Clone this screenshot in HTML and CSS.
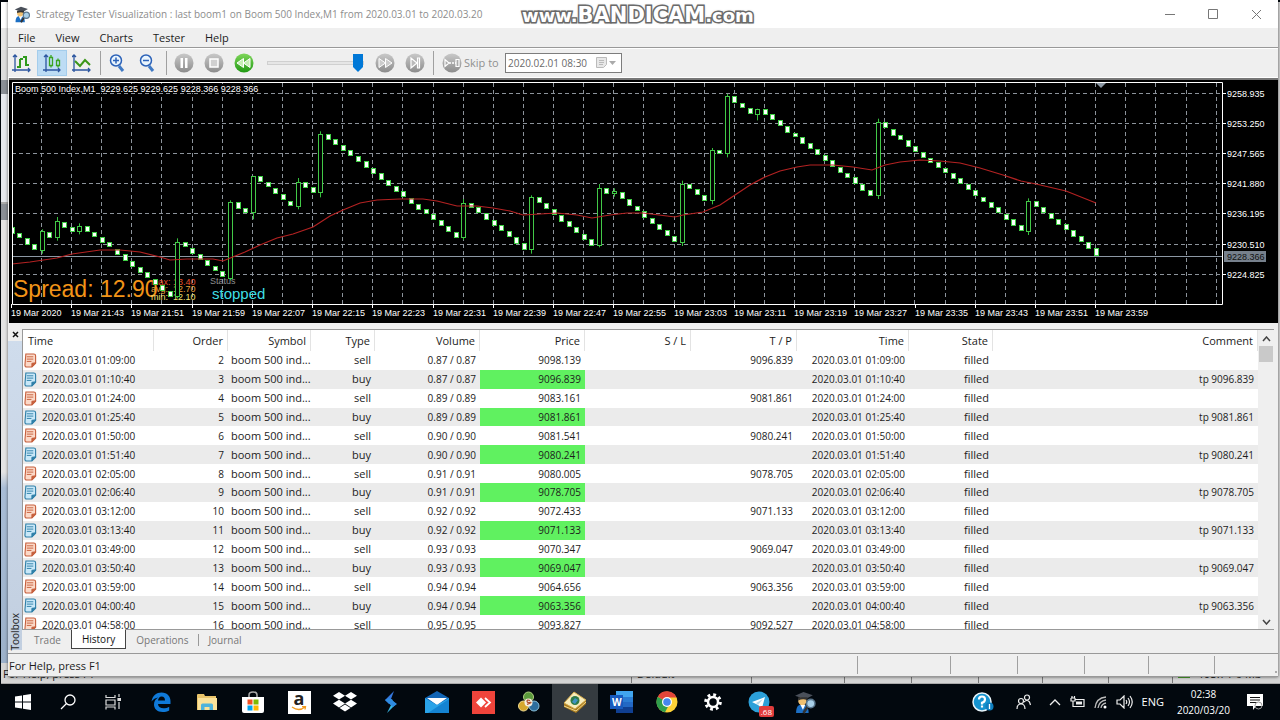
FILE: index.html
```
<!DOCTYPE html>
<html lang="en">

<head>
    <meta charset="UTF-8" />
    <title>Strategy Tester Visualization</title>
    <link rel="stylesheet" href="styles.css">
</head>

<body>
    <svg class="defs" width="0" height="0">
        <defs>
            <linearGradient id="ball" x1="0" y1="0" x2="0" y2="1">
                <stop offset="0" stop-color="#c9c9c9" />
                <stop offset="1" stop-color="#8c8c8c" />
            </linearGradient>
            <linearGradient id="ballGreen" x1="0" y1="0" x2="0" y2="1">
                <stop offset="0" stop-color="#7fd65a" />
                <stop offset="1" stop-color="#219a14" />
            </linearGradient>
            <symbol id="grad" viewBox="0 0 22 22">
                <path d="M2 21c0-6 2-8 6-8s6 3 6 8z" fill="#1c6fc4" />
                <path d="M6 13l2.500 5 2.500-5z" fill="#fff" />
                <circle cx="8" cy="9.500" r="4" fill="#f0c070" />
                <path d="M1 4.500L9 1l9 3-7 4z" fill="#4a505a" />
                <path d="M4 6v3q5-2 9 0V6z" fill="#333" />
                <path d="M13 15l-4 6" stroke="#333" stroke-width="2.500" />
                <circle cx="16" cy="12" r="4" fill="#a8cfe8" stroke="#59758c" stroke-width="1.500" />
            </symbol>
            <symbol id="note" viewBox="0 0 14 16">
                <path d="M2 1h8.500q2 0 2 2v8l-4 4H3q-2 0-2-2z" fill="var(--fill)" stroke="var(--line)" stroke-width="1.200" />
                <path d="M12.500 10.500l-4 4.500v-4z" fill="var(--line)" stroke="var(--line)" />
                <path d="M3 4h7M3 6.500h7M3 9h5" stroke="var(--line)" stroke-width="1" />
            </symbol>
        </defs>
    </svg>

    <div class="desktop">
        <!-- terminal window behind the tester -->
        <div class="terminal">
            <div class="terminal-side"></div>
            <div class="terminal-status">
                <span class="help">For Help, press F1</span>
                <i class="w120">Default</i><i class="w93"></i><i class="w67"></i><i class="w67"></i><i class="w64"></i><i class="w66"></i><i class="w64"></i>
                <i class="net"><b></b>193.7 / 0 Mb</i>
            </div>
        </div>

        <main class="window">
            <header class="titlebar">
                <svg width="17" height="17"><use href="#grad" /></svg>
                <h1>Strategy Tester Visualization : last boom1 on Boom 500 Index,M1 from 2020.03.01 to 2020.03.20</h1>
                <button aria-label="Minimize"><svg width="11" height="11"><path d="M0 5.500h10" /></svg></button>
                <button aria-label="Maximize"><svg width="11" height="11"><path d="M.5.500h9v9h-9z" /></svg></button>
                <button aria-label="Close"><svg width="11" height="11"><path d="M1 1l9 9M10 1l-9 9" /></svg></button>
            </header>

            <nav class="menu">
                <button>File</button>
                <button>View</button>
                <button>Charts</button>
                <button>Tester</button>
                <button>Help</button>
            </nav>

            <div class="toolbar">
                <button aria-label="Bar chart">
                    <svg width="20" height="20" fill="none" stroke="#2c56a0" stroke-width="1.300">
                        <path d="M3 2v17M0 17h18M1 4l2-2 2 2M16 15l2 2-2 2" />
                        <path d="M8 6v9M8 14H5M8 6h3M14 3v10M14 4h-3M14 12h3" stroke="#2f9a1c" stroke-width="2" />
                    </svg>
                </button>
                <button class="on" aria-label="Candlesticks">
                    <svg width="20" height="20" fill="none" stroke="#2c56a0" stroke-width="1.300">
                        <path d="M4 2v17M1 17h17M2 4l2-2 2 2M16 15l2 2-2 2" />
                        <path d="M7.500 4.500h3v8h-3zM9 2v2.500M9 12.500v2M14.500 7.500h3v5h-3zM16 5.500v2M16 12.500v2" stroke="#3aa51f" />
                    </svg>
                </button>
                <button aria-label="Line chart">
                    <svg width="20" height="20" fill="none" stroke="#2c56a0" stroke-width="1.300">
                        <path d="M2 2v17M0 17h18M0 4l2-2 2 2M16 15l2 2-2 2" />
                        <path d="M3 8l5 5 5-6 5 5" stroke="#3c961a" stroke-width="2" />
                    </svg>
                </button>
                <span class="sep"></span>
                <button aria-label="Zoom in">
                    <svg width="20" height="20" fill="none" stroke="#2c62b8" stroke-width="1.500">
                        <path d="M11 13l4 5" stroke="#3f79c4" stroke-width="3" />
                        <circle cx="8" cy="7.500" r="5.500" fill="#eaf5fd" />
                        <path d="M5 7.500h6M8 4.500v6" />
                    </svg>
                </button>
                <button aria-label="Zoom out">
                    <svg width="20" height="20" fill="none" stroke="#2c62b8" stroke-width="1.500">
                        <path d="M11 13l4 5" stroke="#3f79c4" stroke-width="3" />
                        <circle cx="8" cy="7.500" r="5.500" fill="#eaf5fd" />
                        <path d="M5 7.500h6" />
                    </svg>
                </button>
                <span class="sep"></span>
                <button aria-label="Pause">
                    <svg width="20" height="20"><circle cx="10" cy="10" r="9.500" fill="url(#ball)" /><path d="M6.500 5h2.500v10H6.500zM11 5h2.500v10H11z" fill="#fff" /></svg>
                </button>
                <button aria-label="Stop">
                    <svg width="20" height="20"><circle cx="10" cy="10" r="9.500" fill="url(#ball)" /><path d="M6 6h8v8H6z" fill="#d0d0d0" stroke="#fff" stroke-width="1.500" /></svg>
                </button>
                <button aria-label="Slower">
                    <svg width="20" height="20"><circle cx="10" cy="10" r="9.500" fill="url(#ballGreen)" /><path d="M9.500 5.500v9L3 10zM16 5.500v9L9.500 10z" fill="#c5efb4" stroke="#fff" /></svg>
                </button>
                <input class="speed" type="range" min="0" max="100" value="100" aria-label="Speed">
                <button aria-label="Faster">
                    <svg width="20" height="20"><circle cx="10" cy="10" r="9.500" fill="url(#ball)" /><path d="M4 5.500v9l6.500-4.500zM10.500 5.500v9L17 10z" fill="#ccc" stroke="#fff" /></svg>
                </button>
                <button aria-label="To end">
                    <svg width="20" height="20"><circle cx="10" cy="10" r="9.500" fill="url(#ball)" /><path d="M6 5v10l6-5zM12.500 5h2v10h-2z" fill="#bbb" stroke="#fff" stroke-width="1.200" /></svg>
                </button>
                <span class="sep"></span>
                <label class="skip" for="skip">
                    <svg width="20" height="20"><circle cx="10" cy="10" r="9.500" fill="url(#ball)" /><path d="M3 6.500v7L7 10zM14 6.500h3v7h-3z" fill="#aaa" stroke="#fff" stroke-width="1.200" /><path d="M7 10h7" stroke="#fff" stroke-width="1.500" stroke-dasharray="2 1" /></svg>
                    Skip to
                </label>
                <div class="datebox">
                    <input id="skip" type="text" value="2020.02.01 08:30" disabled>
                    <svg width="20" height="12"><path d="M.5.500h10v7l-3 3h-7z" fill="#e8e8e8" stroke="#bbb" /><path d="M3 3.500h5M3 5.500h5M3 7.500h4" stroke="#bbb" /><path d="M13 4h7l-3.500 4z" fill="#aaa" /></svg>
                </div>
            </div>

            <section class="chart">
                <svg id="chart" width="1268" height="243" viewBox="9 80 1268 243"></svg>
            </section>

            <section class="toolbox">
                <aside>
                    <button aria-label="Close toolbox"><svg width="7" height="7"><path d="M1 1l5 5M6 1L1 6" stroke="#111" stroke-width="1.500" /></svg></button>
                    <span>Toolbox</span>
                </aside>
                <div class="panel">
                    <div class="list">
                        <div class="scroller">
                            <table>
                                <colgroup>
                                    <col class="c-time"><col class="c-order"><col class="c-symbol"><col class="c-type">
                                    <col class="c-volume"><col class="c-volume"><col class="c-sl"><col class="c-sl">
                                    <col class="c-close"><col class="c-state"><col>
                                </colgroup>
                                <thead>
                                    <tr>
                                        <th>Time</th><th>Order</th><th>Symbol</th><th>Type</th><th>Volume</th><th>Price</th>
                                        <th>S / L</th><th>T / P</th><th>Time</th><th>State</th><th>Comment</th>
                                    </tr>
                                </thead>
                                <tbody id="orders"></tbody>
                            </table>
                        </div>
                        <div class="scrollbar">
                            <svg width="9" height="6"><path d="M1 5l3.500-4L8 5" /></svg>
                            <i></i>
                            <svg class="down" width="9" height="6"><path d="M1 1l3.500 4L8 1" /></svg>
                        </div>
                    </div>
                    <div class="tabs">
                        <button>Trade</button>
                        <button class="active">History</button>
                        <button>Operations</button>
                        <button class="split">Journal</button>
                    </div>
                </div>
            </section>

            <footer class="status">
                <span>For Help, press F1</span>
                <i class="w93"></i><i class="w67"></i><i class="w67"></i><i class="w64"></i><i class="w66"></i><i class="w64 grip"></i>
            </footer>
        </main>

        <div class="watermark">www.<b>BANDICAM</b>.com</div>
    </div>

    <div class="taskbar">
        <button class="sys" aria-label="Start"><svg width="16" height="16" fill="#fff"><path d="M0 2.500l7-1v6H0zM8 1.300L16 0v7.500H8zM0 8.500h7v6l-7-1zM8 8.500h8V16l-8-1.300z" /></svg></button>
        <button class="sys" aria-label="Search"><svg width="16" height="16" fill="none" stroke="#fff" stroke-width="1.300"><circle cx="10" cy="6" r="5" /><path d="M6.500 9.500L1 15" /></svg></button>
        <button class="sys" aria-label="Task view"><svg width="16" height="16" fill="none" stroke="#ddd" stroke-width="1.200"><path d="M1 1v2.500h9V1M1 6h9v5H1zM1 15.500V13h9v2.500M14 0v3M14 8v7" /><path d="M13 4.500h2.500v2H13z" fill="#ddd" /></svg></button>
        <button class="first" aria-label="Edge"><svg width="20" height="20"><path d="M.5 9.500C1.500 3.500 5.500.5 10.500.5c6 0 9 4 9 9V12H7c.2 3 2.500 4.300 5.500 4.300 2 0 4-.6 5.700-1.600V18.500c-2 1-4.200 1.500-6.500 1.500C6 20 3 16.500 3 12.500c0-3 1.600-5.500 4.300-6.900C4.500 6 2.300 7.200.5 9.500zM7 8.500h7c0-2.500-1.200-4-3.400-4C8.500 4.500 7.300 6.300 7 8.500z" fill="#0f79d8" /></svg></button>
        <button aria-label="File Explorer"><svg width="22" height="20"><path d="M1 3q0-1 1-1h6l1 2h11v14H1z" fill="#e9c46a" /><path d="M2 6h19v12H2z" fill="#fbe29a" /><path d="M5 18v-5q0-1.500 1.500-1.500h9Q17 11.500 17 13v5h-3.500v-3h-5v3z" fill="#4fb3dc" /></svg></button>
        <button aria-label="Store"><svg width="22" height="22"><path d="M7 6V4q0-3 4-3t4 3v2" fill="none" stroke="#aaa" stroke-width="1.500" /><path d="M0 6h22v14q0 2-2 2H2q-2 0-2-2z" fill="#fff" /><path d="M5.500 8.500h5v5h-5z" fill="#f25022" /><path d="M11.500 8.500h5v5h-5z" fill="#7fba00" /><path d="M5.500 14.500h5v5h-5z" fill="#00a4ef" /><path d="M11.500 14.500h5v5h-5z" fill="#ffb900" /></svg></button>
        <button aria-label="Amazon"><span class="amazon">a<svg width="16" height="5"><path d="M1 1q7 5 13 0M11 .6h3.500L14 3.500" fill="none" stroke="#f29a1f" stroke-width="1.300" /></svg></span></button>
        <button aria-label="Dropbox"><svg width="24" height="20" fill="#fff"><path d="M6 0l6 3.800-6 3.800-6-3.800zM18 0l6 3.800-6 3.800-6-3.800zM6 7.800l6 3.800-6 3.800-6-3.800zM18 7.800l6 3.800-6 3.800-6-3.800zM12 12.600l5.500 3.500L12 19.600l-5.500-3.500z" /></svg></button>
        <button aria-label="Trading app"><svg width="14" height="22"><path d="M10 0L1 9l4 4 4-4-2-1z" fill="#3577dd" /><path d="M3 22l9-9-5-5-3 3 3 3z" fill="#37b4e2" /><path d="M1 9l4-2 8 6-4 3z" fill="#2f8be0" /></svg></button>
        <button aria-label="Mail"><svg width="24" height="22"><path d="M0 7l12-7 12 7v8H0z" fill="#1265b5" /><path d="M2 7h20l-10 7z" fill="#fff" /><path d="M0 7l12 7 12-7v15H0z" fill="#2aa3e8" /><path d="M3 22l21-14v14z" fill="#1483d2" /></svg></button>
        <button aria-label="AnyDesk"><svg width="23" height="23"><path d="M0 0h23v23H0z" fill="#ef443b" /><path d="M4 11.500L9 6.500l5 5-5 5z" fill="#fff" /><path d="M13 7l5 4.500-5 4.500" fill="none" stroke="#fff" stroke-width="1.800" /></svg></button>
        <button aria-label="MetaTrader"><svg width="22" height="22"><circle cx="10.500" cy="6" r="5" fill="#5b9a3c" stroke="#b3cf82" /><circle cx="5.500" cy="15" r="5" fill="#d6a72d" stroke="#f0dc93" /><circle cx="16" cy="15" r="5" fill="#2d6e9e" stroke="#8abfd8" /><circle cx="10.500" cy="11.500" r="4" fill="#f6efe0" /><path d="M12 9.500q-3-1-3 .7t3 1.200-3 2" fill="none" stroke="#b0502c" stroke-width="1.200" /></svg></button>
        <button class="active" aria-label="MetaTrader terminal"><svg width="24" height="22"><path d="M1 13L11 1l12 8v4L13 22 1 16z" fill="#a87a20" /><path d="M1 15l12 5 10-9" fill="none" stroke="#f0d78a" /><path d="M1 12L11 1l12 8-11 9z" fill="#f8ecbb" stroke="#d1a849" /><circle cx="12" cy="9.500" r="4.500" fill="#2f7a49" /><path d="M9 11l3-4 3 2-3 4z" fill="#3f92c4" /></svg></button>
        <button aria-label="Word"><svg width="23" height="22"><path d="M6 0h17v22H6z" fill="#2368c4" /><path d="M6 0h17v6H6z" fill="#41a5ee" /><path d="M6 6h17v5H6z" fill="#2b7cd3" /><path d="M6 16h17v6H6z" fill="#103f91" /><path d="M0 4h13v14H0z" fill="#185abd" /><text x="2" y="15" class="word">W</text></svg></button>
        <button aria-label="Chrome"><svg width="22" height="22"><circle cx="11" cy="11" r="10.500" fill="#fdd237" /><path d="M11 11L1.800 5.700A10.500 10.500 0 0 0 9 21.300L13.500 13z" fill="#2f9e4c" /><path d="M11 11L1.800 5.700A10.500 10.500 0 0 1 20.500 6.500H11z" fill="#e2453a" /><circle cx="11" cy="11" r="5" fill="#fff" /><circle cx="11" cy="11" r="3.800" fill="#4586ee" /></svg></button>
        <button aria-label="Settings"><svg width="18" height="18" fill="none" stroke="#fff"><circle cx="9" cy="9" r="5" stroke-width="2.500" /><circle cx="9" cy="9" r="7.300" stroke-width="3" stroke-dasharray="2.800 2.930" /></svg></button>
        <button class="telegram" aria-label="Telegram"><svg width="22" height="22"><circle cx="11" cy="11" r="10.500" fill="#2ca0d9" /><path d="M4 11l13-5-3 11-4-3z" fill="#fff" /><path d="M8 12l7-4-5 6z" fill="#b8d9ea" /></svg><em>.68</em></button>
        <button aria-label="Strategy Tester"><svg width="23" height="23"><use href="#grad" /></svg></button>

        <div class="tray">
            <svg width="22" height="22"><circle cx="10" cy="11" r="9" fill="#1593cf" stroke="#e8f4fa" stroke-width="1.500" /><path d="M7 8.500q0-3 3-3t3 2.700-3 3.500v1.800M10 14.500v2" fill="none" stroke="#fff" stroke-width="2.200" /><circle cx="17.500" cy="15.500" r="4" fill="#0f7fc0" /><path d="M17.500 13v5" stroke="#fff" stroke-width="1.300" /></svg>
            <svg class="people" width="15" height="16" fill="none" stroke="#eee" stroke-width="1.200"><circle cx="5" cy="7" r="2.500" /><path d="M1 15q0-5 4-5t4 5" /><circle cx="11" cy="3.500" r="2.500" /><path d="M8 8q3-3 5.500 0l1 3" /></svg>
            <svg width="12" height="8" fill="none" stroke="#eee" stroke-width="1.300"><path d="M1 7l5-5 5 5" /></svg>
            <svg width="15" height="12" fill="none" stroke="#eee" stroke-width="1.200"><path d="M5 3.500h9v7H3V8M1 2h4M2 0v2M4.500 0v2M1 2v3h4V2M3 5v3" /><path d="M6 5.500h6v3H6z" fill="#eee" stroke="none" /></svg>
            <svg width="13" height="13" fill="none" stroke="#bbb" stroke-width="1.300"><path d="M1 12Q2 2 12 1M4 12q1-7 8-8M7 12q.5-4 5-5" /><circle cx="11" cy="11" r="1.500" fill="#fff" stroke="none" /></svg>
            <svg width="17" height="14" fill="none" stroke="#eee" stroke-width="1.200"><path d="M1 5h3l4-4v12L4 9H1zM10 5q1.500 2 0 4M12 3q3 4 0 8M14 1q4.500 6 0 12" /></svg>
            <span>ENG</span>
            <time>02:38<br>2020/03/20</time>
            <svg width="16" height="17"><path d="M0 0h16v12H9l-3 4v-4H0z" fill="#fff" /><path d="M3 3.500h10M3 6h10M3 8.500h7" stroke="#111" /><circle cx="11.500" cy="11.500" r="3.500" fill="none" stroke="#999" /></svg>
        </div>
    </div>

    <script src="script.js"></script>
</body>

</html>
```
FILE: styles.css
```
* {
    box-sizing: border-box;
}

body {
    margin: 0;
    height: 100vh;
    display: flex;
    flex-direction: column;
    overflow: hidden;
    background: #02080e;
    font: 11px/16px "Open Sans", "Noto Sans", sans-serif;
    color: #1c1c1c;
}

button,
input {
    font: inherit;
    color: inherit;
    border: 0;
    padding: 0;
    margin: 0;
    background: none;
}

svg {
    display: block;
    flex: none;
}

.defs {
    position: absolute;
}

.desktop {
    position: relative;
    flex: 1;
    min-height: 0;
}

/* terminal in the background */

.terminal {
    position: absolute;
    inset: 2px 0 0 1px;
    background: #d5d5d5;
    display: flex;
    flex-direction: column;
}

.terminal-side {
    flex: 1;
    width: 7px;
    background: linear-gradient(#fff 0 26px, #e6e6e6 26px 48px, #ddd 48px 78px, #8a8f96 78px 92px, #e6e9ee 92px 200px, #aaa 200px 202px, #8a8f96 202px 218px, #e4e4e4 218px 470px, #a9bdd6 486px, #9cb1ca);
}

.terminal-status {
    height: 21px;
    display: flex;
    border-bottom: 1px solid #aaa;
    line-height: 22px;
}

.terminal-status .help {
    flex: 1;
    padding-left: 2px;
}

.terminal-status i {
    padding-left: 5px;
    border-left: 1px solid #777;
    font-style: normal;
}

.terminal-status .net {
    width: 108px;
    white-space: nowrap;
}

.terminal-status .net b {
    display: inline-block;
    width: 12px;
    height: 9px;
    margin-right: 8px;
    background: #4aa02c;
}

.w120 { width: 120px; }
.w93 { width: 93px; }
.w67 { width: 67px; }
.w66 { width: 66px; }
.w64 { width: 64px; }

/* tester window */

.window {
    position: absolute;
    inset: 0 2px 7px 8px;
    display: flex;
    flex-direction: column;
    background: #efefef;
    box-shadow: 0 0 3px #0009;
}

.titlebar {
    height: 28px;
    display: flex;
    align-items: center;
    padding-left: 6px;
    background: #fff;
    color: #8d8d8d;
}

.titlebar h1 {
    flex: 1;
    margin: 0 0 0 5px;
    font-size: 10px;
    font-weight: 400;
}

.titlebar button {
    width: 43px;
    height: 28px;
    display: grid;
    place-items: center;
}

.titlebar path {
    fill: none;
    stroke: #777;
}

.menu {
    height: 20px;
    display: flex;
    gap: 20px;
    padding-left: 10px;
    border-bottom: 1px solid #999;
}

.toolbar {
    height: 30px;
    display: flex;
    align-items: center;
    gap: 2px;
    border-top: 1px solid #fff;
    border-bottom: 1px solid #fff;
}

.toolbar button {
    width: 28px;
    height: 24px;
    display: grid;
    place-items: center;
}

.toolbar .on {
    background: #bddcf4;
    outline: 1px solid #a4cdec;
}

.sep {
    width: 1px;
    height: 24px;
    margin: 0 1px 0 2px;
    background: #a0a0a0;
}

.speed {
    appearance: none;
    width: 97px;
    height: 20px;
    margin: 0 5px 0 7px;
}

.speed::-webkit-slider-runnable-track {
    height: 4px;
    border: 1px solid #d0d0d0;
    background: #e6e6e6;
}

.speed::-webkit-slider-thumb {
    appearance: none;
    width: 10px;
    height: 18px;
    margin-top: -8px;
    background: #0078d7;
    clip-path: polygon(0 0, 100% 0, 100% 72%, 50% 100%, 0 72%);
}

.skip {
    display: flex;
    align-items: center;
    gap: 2px;
    width: 61px;
    margin-left: 5px;
    color: #8f8f8f;
    white-space: nowrap;
}

.datebox {
    display: flex;
    align-items: center;
    width: 117px;
    height: 20px;
    padding: 0 5px 0 2px;
    border: 1px solid #7d7d7d;
    background: #fff;
    color: #6a6a6a;
    font-size: 10px;
}

.datebox input {
    flex: 1;
    min-width: 0;
}

.chart {
    height: 245px;
    margin-left: 1px;
    border-top: 2px solid #777;
    background: #000;
    overflow: hidden;
}

#chart {
    font: 9px "Liberation Sans", Arial, sans-serif;
    fill: #fff;
}

#chart .spread {
    font-size: 23px;
}

#chart .stopped {
    font-size: 15px;
}

/* toolbox */

.toolbox {
    flex: 1;
    min-height: 0;
    margin-top: 6px;
    display: flex;
    padding-bottom: 3px;
    border-bottom: 1px solid #999;
}

.toolbox aside {
    width: 14px;
    display: flex;
    flex-direction: column;
    justify-content: space-between;
    align-items: center;
    background: linear-gradient(#efefef 12px, #cfdcec 12px, #c2cfe0);
}

.toolbox aside button {
    height: 10px;
}

.toolbox aside span {
    writing-mode: vertical-rl;
    transform: rotate(180deg);
    font-size: 10px;
    line-height: 14px;
}

.panel {
    flex: 1;
    min-width: 0;
    display: flex;
    flex-direction: column;
    padding-right: 4px;
}

.list {
    flex: 1;
    min-height: 0;
    display: flex;
    border: 1px solid #999;
    border-width: 1px 0 1px 1px;
    background: #fff;
}

.scroller {
    flex: 1;
    overflow: hidden;
}

table {
    width: 100%;
    height: 304px;
    table-layout: fixed;
    border-collapse: collapse;
}

.c-time { width: 131px; }
.c-order { width: 74px; }
.c-symbol { width: 83px; }
.c-type { width: 64px; }
.c-volume { width: 105px; }
.c-sl { width: 106px; }
.c-close { width: 112px; }
.c-state { width: 84px; }

th {
    height: 21px;
    padding: 0 5px;
    font-weight: 400;
    text-align: right;
    box-shadow: inset -1px 0 #e3e3e3;
}

th:first-child {
    text-align: left;
}

td {
    height: 18px;
    padding: 0 4px;
    font-size: 10px;
    line-height: 16px;
    text-align: right;
    white-space: nowrap;
}

td.text {
    font-size: 11px;
}

td:nth-child(3) {
    text-align: left;
    padding: 0 3px;
}

td .time {
    display: flex;
    align-items: center;
    gap: 5px;
    margin-left: -3px;
}

tr.buy td {
    background: #ebebeb;
}

tr.buy td.hit {
    background: #60f160;
}

.sell {
    --fill: #fbd9c8;
    --line: #c65f3c;
}

.buy {
    --fill: #c9e8f8;
    --line: #2f7fa8;
}

.scrollbar {
    width: 16px;
    display: flex;
    flex-direction: column;
    align-items: center;
    padding: 6px 0 4px;
    background: #efefef;
}

.scrollbar path {
    fill: none;
    stroke: #444;
    stroke-width: 1.5;
}

.scrollbar i {
    width: 14px;
    height: 16px;
    margin-top: 4px;
    background: #c9c9c9;
}

.scrollbar .down {
    margin-top: auto;
}

.tabs {
    height: 20px;
    display: flex;
    padding-left: 2px;
    font-size: 10px;
    color: #777;
}

.tabs button {
    height: 19px;
    padding: 0 10px;
}

.tabs .active {
    margin-top: -1px;
    height: 20px;
    border: 1px solid #444;
    border-top-color: #fff;
    background: #fff;
    color: #111;
}

.tabs .split {
    position: relative;
}

.tabs .split::before {
    content: "";
    position: absolute;
    left: 0;
    top: 4px;
    height: 12px;
    border-left: 1px solid #999;
}

.status {
    height: 23px;
    display: flex;
    align-items: flex-end;
    padding: 0 0 2px 1px;
    border-bottom: 1px solid #999;
}

.status span {
    flex: 1;
}

.status i {
    height: 18px;
    border-left: 1px solid #a0a0a0;
}

.grip {
    background: radial-gradient(circle at 2px 2px, #aaa 1px, transparent 1px) right bottom / 4px 4px no-repeat;
}

.watermark {
    position: absolute;
    left: 522px;
    top: 3px;
    font: bold 18px/24px "DejaVu Sans", sans-serif;
    color: #fff;
    paint-order: stroke;
    -webkit-text-stroke: 3px #666;
    text-shadow: 0 0 3px #777;
}

.watermark b {
    font-size: 21px;
}

/* taskbar */

.taskbar {
    height: 36px;
    display: flex;
    color: #fff;
    background: #02080e;
}

.taskbar button {
    width: 46px;
    display: grid;
    place-items: center;
}

.taskbar .sys {
    width: 45px;
}

.taskbar .first {
    margin-left: 3px;
}

.taskbar .active {
    background: #353b40;
}

.amazon {
    width: 23px;
    height: 23px;
    background: #fff;
    color: #222;
    font: bold 18px/15px "Open Sans", sans-serif;
}

.amazon svg {
    margin: 0 auto;
}

.word {
    font: bold 10px "Open Sans", sans-serif;
    fill: #fff;
}

.telegram {
    position: relative;
}

.telegram em {
    position: absolute;
    right: 8px;
    bottom: 3px;
    padding: 0 2px;
    border-radius: 2px;
    background: #e03c3c;
    font: 8px/11px "Open Sans", sans-serif;
}

.tray {
    margin-left: auto;
    display: flex;
    align-items: center;
    gap: 9px;
    padding-right: 17px;
}

.tray .people {
    margin: 0 9px 0 13px;
}

.tray time {
    margin: 0 8px 0 4px;
    font-size: 10px;
    text-align: center;
}
```
FILE: script.js
```
// candles: top, bottom, [wick top, wick bottom] for rising ones, three units per pixel
var candles = [
    [441, 461], [460, 475], [475, 495], [493, 512], [453, 512, 448, 521], [455, 472], [424, 475, 411, 482], [425, 443],
    [442, 458], [438, 455, 430, 463], [438, 457], [456, 470], [470, 487], [487, 503], [506, 523], [523, 543],
    [543, 560], [560, 577], [577, 595], [596, 613], [616, 633], [633, 651], [487, 652, 475, 655], [487, 501],
    [503, 521], [521, 538], [541, 558], [558, 574], [574, 592], [365, 595, 361, 601], [365, 385], [385, 401],
    [289, 400, 289, 418], [289, 307], [307, 323], [325, 343], [343, 361], [362, 376], [306, 380, 294, 388], [306, 323],
    [322, 341], [163, 340, 154, 352], [161, 179], [178, 196], [195, 212], [210, 228], [227, 244], [244, 264],
    [263, 281], [280, 301], [300, 318], [317, 334], [334, 353], [353, 372], [371, 388], [388, 403],
    [403, 422], [421, 439], [439, 456], [455, 472], [368, 472, 357, 480], [368, 382], [382, 400], [400, 420],
    [419, 437], [436, 453], [452, 470], [470, 490], [489, 510], [352, 510, 346, 521], [351, 368], [368, 386],
    [386, 403], [404, 424], [424, 442], [442, 461], [461, 478], [478, 498], [325, 499, 312, 502], [325, 343],
    [334, 343, 325, 350], [335, 357], [357, 379], [379, 394], [394, 414], [413, 432], [432, 450], [450, 467],
    [469, 488], [312, 488, 302, 498], [311, 325], [328, 346], [346, 363], [210, 363, 204, 373], [211, 224], [48, 223, 42, 232],
    [48, 70], [70, 86], [85, 103], [86, 103, 86, 121], [86, 103], [103, 120], [120, 139], [139, 159],
    [159, 172], [170, 190], [190, 208], [206, 224], [224, 242], [241, 261], [260, 278], [278, 292],
    [292, 312], [312, 332], [331, 349], [127, 349, 116, 357], [127, 145], [146, 166], [165, 179], [179, 199],
    [199, 217], [216, 233], [233, 247], [247, 264], [263, 279], [278, 296], [295, 312], [312, 331],
    [331, 349], [350, 366], [365, 383], [382, 400], [401, 418], [416, 437], [436, 455], [362, 455, 355, 465],
    [362, 381], [382, 400], [399, 416], [416, 434], [433, 451], [450, 470], [469, 488], [487, 507], [505, 528],
];

var average = "12,264 30,262 57,258 72,254 100,250 120,250 140,252 160,257 170,260 187,259 213,259 223,261 245,252 260,245 277,238 293,234 313,227 330,216 343,210 360,203 377,200 400,199 423,199 437,201 457,206 477,206 493,208 510,211 523,215 557,213 577,215 592,218 610,215 627,213 643,213 675,217 683,215 703,212 720,205 735,195 750,185 765,177 780,171 797,167 810,165 833,165 853,167 872,170 885,165 900,162 920,160 940,161 960,163 980,168 1003,175 1021,181 1036,184 1066,191 1096,203";

var prices = ["9258.935", "9253.250", "9247.565", "9241.880", "9236.195", "9230.510", "9224.825"];
var times = ["2020", "21:43", "21:51", "21:59", "22:07", "22:15", "22:23", "22:31", "22:39", "22:47", "22:55", "23:03", "23:11", "23:19", "23:27", "23:35", "23:43", "23:51", "23:59"];

function drawChart() {
    var s = "";
    var step = 7.53;
    var i;

    // grid
    for (i = 0; i < 40; i++) {
        var gx = Math.round(42 + i * step * 4) - 0.5;
        s += '<path d="M' + gx + ' 83V304" stroke="#8c939b" stroke-dasharray="4 3"/>';
    }
    for (i = 0; i < prices.length; i++) {
        var gy = Math.round(94 + i * 30.1);
        s += '<path d="M12 ' + (gy - 0.5) + 'H1222" stroke="#8c939b" stroke-dasharray="4 3"/>';
        s += '<path d="M1222 ' + (gy - 0.5) + 'h4" stroke="#fff"/>';
        s += '<text x="1227" y="' + (gy + 3) + '">' + prices[i] + '</text>';
    }
    s += '<path d="M12 256.500H1222" stroke="#8c98a4"/>';

    // comments drawn by the expert
    s += '<text class="spread" x="13" y="297" fill="#f29418">Spread: 12.90</text>';
    s += '<text x="151" y="285" fill="#e2502c">max: 13.40</text>';
    s += '<text x="151" y="292" fill="#e8a03c">avg:&#160; 12.70</text>';
    s += '<text x="151" y="300" fill="#f0e070">min:&#160; 12.10</text>';
    s += '<text x="210" y="284" fill="#8f8f8f">Status</text>';
    s += '<text class="stopped" x="212" y="299" fill="#3fdfe6">stopped</text>';

    for (i = 0; i < candles.length; i++) {
        var c = candles[i];
        var x = Math.round(11.6 + i * step);
        var top = Math.round(80 + c[0] / 3);
        var h = Math.round((c[1] - c[0]) / 3) - 1;
        if (c.length > 2) {
            s += '<path d="M' + (x + 0.5) + ' ' + (80 + c[2] / 3) + 'V' + (80 + c[3] / 3) + '" stroke="#35c13c"/>';
            s += '<rect x="' + (x - 1.5) + '" y="' + (top + 0.5) + '" width="4" height="' + h + '" fill="#000" stroke="#42c947"/>';
        } else {
            s += '<rect x="' + (x - 1.5) + '" y="' + (top + 0.5) + '" width="4" height="' + h + '" fill="#fff" stroke="#3fd044"/>';
        }
    }
    s += '<polyline points="' + average + '" fill="none" stroke="#b32222" stroke-width="1.200"/>';

    // frame and axes
    s += '<path d="M8 80h4v243H8z" fill="#000"/>';
    s += '<path d="M12.500 82.500H1222.500V304.500H12.500z" fill="none" stroke="#fff"/>';
    s += '<path d="M1096 83h10l-5 5z" fill="#8c98a4"/>';
    for (i = 0; i < times.length; i++) {
        var tx = Math.round(12 + i * step * 8);
        s += '<path d="M' + (tx - 0.5) + ' 304v4" stroke="#fff"/>';
        s += '<text x="' + (tx - 1) + '" y="316">19 Mar ' + times[i] + '</text>';
    }
    s += '<rect x="1224" y="251" width="42" height="11" fill="#76808c"/>';
    s += '<text x="1227" y="260" fill="#111">9228.366</text>';
    s += '<rect x="14" y="84" width="239" height="9" fill="#000"/>';
    s += '<text x="15" y="92">Boom 500 Index,M1&#160; 9229.625 9229.625 9228.366 9228.366</text>';
    document.getElementById("chart").innerHTML = s;
}

// time, volume, price, target
var orders = [
    ["01:09:00", "0.87", "9098.139", "9096.839"],
    ["01:10:40", "0.87", "9096.839"],
    ["01:24:00", "0.89", "9083.161", "9081.861"],
    ["01:25:40", "0.89", "9081.861"],
    ["01:50:00", "0.90", "9081.541", "9080.241"],
    ["01:51:40", "0.90", "9080.241"],
    ["02:05:00", "0.91", "9080.005", "9078.705"],
    ["02:06:40", "0.91", "9078.705"],
    ["03:12:00", "0.92", "9072.433", "9071.133"],
    ["03:13:40", "0.92", "9071.133"],
    ["03:49:00", "0.93", "9070.347", "9069.047"],
    ["03:50:40", "0.93", "9069.047"],
    ["03:59:00", "0.94", "9064.656", "9063.356"],
    ["04:00:40", "0.94", "9063.356"],
    ["04:58:00", "0.95", "9093.827", "9092.527"],
];

function drawOrders() {
    var html = "";
    orders.forEach(function(o, n) {
        var type = o[3] ? "sell" : "buy";
        var time = "2020.03.01 " + o[0];
        html += '<tr class="' + type + '">' +
            '<td><div class="time"><svg width="13" height="15"><use href="#note"/></svg>' + time + '</div></td>' +
            '<td>' + (n + 2) + '</td>' +
            '<td class="text">boom 500 ind...</td>' +
            '<td class="text">' + type + '</td>' +
            '<td>' + o[1] + ' / ' + o[1] + '</td>' +
            '<td class="' + (o[3] ? "" : "hit") + '">' + o[2] + '</td>' +
            '<td></td>' +
            '<td>' + (o[3] || "") + '</td>' +
            '<td>' + time + '</td>' +
            '<td class="text">filled</td>' +
            '<td>' + (o[3] ? "" : "tp " + o[2]) + '</td></tr>';
    });
    document.getElementById("orders").innerHTML = html;
}

drawChart();
drawOrders();
```
